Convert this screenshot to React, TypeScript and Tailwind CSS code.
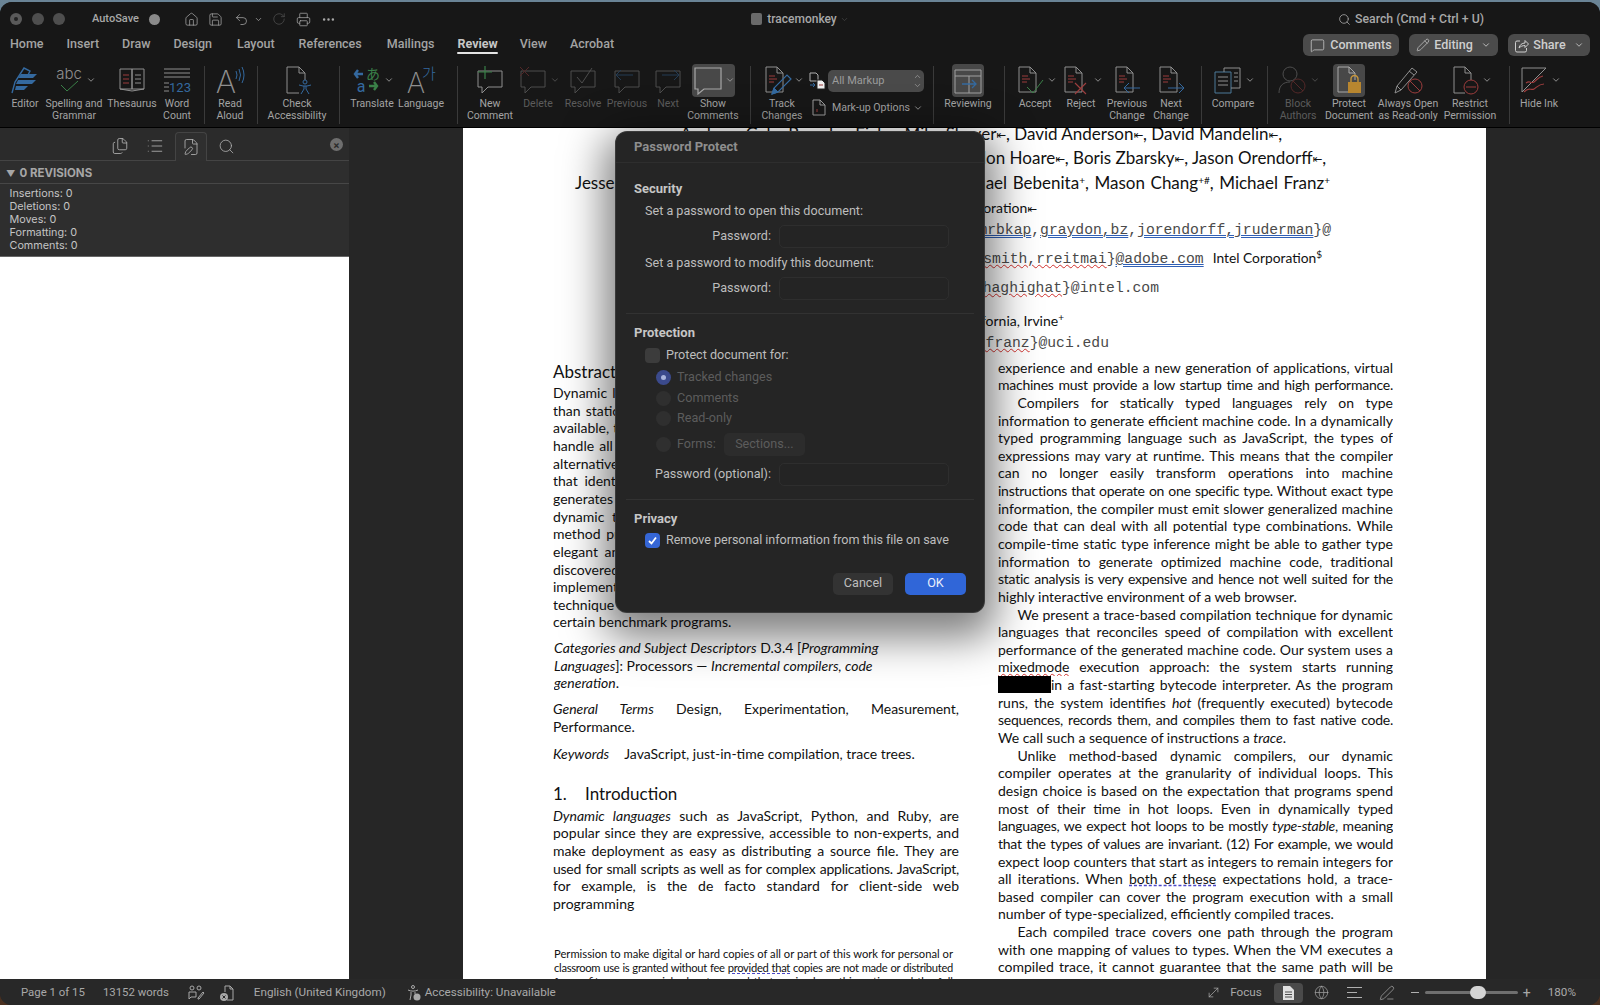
import type { ReactNode } from 'react';
import {
  ChevronDown,
  ChevronUp,
  Ellipsis,
  FilePen,
  Files,
  Globe,
  House,
  List,
  MessageSquare,
  MoveDiagonal,
  Pencil,
  PenLine,
  Printer,
  RotateCw,
  Save,
  Search,
  Undo2,
} from 'lucide-react';

const GRAY = '#8f8f8f';
const RED = '#9c3d3d';
const BLUE = '#34699f';
const GREEN = '#3a8048';

function Ico({ children, w = 32 }: { children: ReactNode; w?: number }) {
  return (
    <svg width={w} height="30" viewBox={`0 0 ${w} 30`} fill="none" stroke={GRAY} strokeWidth="1">
      {children}
    </svg>
  );
}

const docPath = <path d="M5 2h11l6 6v19H5zM16 2v6h6" />;
const redLines = <path d="M8 11h6M8 14h8M8 17h5" stroke={RED} />;
const bubble = <path d="M4 6h24v16H14l-6 6v-6H4z" />;

const EditorIcon = (
  <Ico>
    <path d="M3 28l3-11 9-14 6 3-2 4" stroke={BLUE} strokeWidth="1.4" />
    <path d="M12 9h16l-4 4H9zM9 15h18l-4 4H7zM7 21h12l-4 4H6z" fill={BLUE} stroke="none" />
  </Ico>
);
const SpellingIcon = (
  <Ico>
    <text x="16" y="14" textAnchor="middle" fontSize="15" fontFamily="Inter" fontWeight="300" fill={GRAY} stroke="none">abc</text>
    <path d="M8 20l6 6 11-10" stroke={GREEN} />
  </Ico>
);
const ThesaurusIcon = (
  <Ico>
    <path d="M4 4h12v20H4zM16 4h12v20H16zM4 24l12 2 12-2" />
    <path d="M7 10h6M7 14h6M7 18h6" stroke={RED} />
    <path d="M19 10h6M19 14h6M19 18h6" />
  </Ico>
);
const WordCountIcon = (
  <Ico>
    <path d="M3 4h26M3 8h26M3 12h26M3 18h5M3 22h5M3 26h5" />
    <text x="19" y="27" textAnchor="middle" fontSize="13" fontFamily="Roboto" fill={BLUE} stroke="none">123</text>
  </Ico>
);
const ReadAloudIcon = (
  <Ico>
    <text x="12" y="28" textAnchor="middle" fontSize="31" fontFamily="Inter" fontWeight="200" fill={GRAY} stroke="none">A</text>
    <path d="M22 6q2 4 0 8M25 4q3 6 0 12M28 2q4 8 0 16" stroke={BLUE} />
  </Ico>
);
const AccessibilityIcon = (
  <Ico>
    <path d="M6 28V2h12l6 6v7M18 2v6h6M6 28h12" />
    <circle cx="24" cy="17" r="2" stroke={BLUE} />
    <path d="M18 20l4 1h4l4-1M23 21v3l-3 5M25 21v3l3 5" stroke={BLUE} />
  </Ico>
);
const TranslateIcon = (
  <Ico>
    <text x="10" y="27" textAnchor="middle" fontSize="16" fontFamily="Roboto" fill={BLUE} stroke="none">a</text>
    <text x="22" y="14" textAnchor="middle" fontSize="14" fontFamily="Noto Sans CJK JP" fill={GREEN} stroke="none">あ</text>
    <path d="M4 9h8M7 5L4 9l3 4" stroke={BLUE} strokeWidth="2.4" />
    <path d="M18 21h8M23 17l3 4-3 4" stroke={GREEN} strokeWidth="2.4" />
  </Ico>
);
const LanguageIcon = (
  <Ico>
    <text x="11" y="28" textAnchor="middle" fontSize="28" fontFamily="Inter" fontWeight="200" fill={GRAY} stroke="none">A</text>
    <text x="24" y="14" textAnchor="middle" fontSize="15" fontFamily="Noto Sans CJK KR" fontWeight="300" fill={BLUE} stroke="none">가</text>
  </Ico>
);
const NewCommentIcon = (
  <Ico>
    {bubble}
    <path d="M11 1v13M4 7h14" stroke={GREEN} strokeWidth="1.2" />
  </Ico>
);
const DeleteIcon = (
  <Ico>
    {bubble}
    <path d="M3 2l9 9M12 2l-9 9" stroke={RED} />
  </Ico>
);
const ResolveIcon = (
  <Ico>
    {bubble}
    <path d="M10 12l5 6 10-15" />
  </Ico>
);
const PreviousIcon = (
  <Ico>
    {bubble}
    <path d="M22 10H5M10 5l-5 5 5 5" stroke={BLUE} />
  </Ico>
);
const NextIcon = (
  <Ico>
    {bubble}
    <path d="M10 10h17M22 5l5 5-5 5" stroke={BLUE} />
  </Ico>
);
const ShowIcon = (
  <Ico>
    <path d="M3 3h26v21H12l-6 5v-5H3z" strokeWidth="1.2" stroke="#a8a8a8" />
  </Ico>
);
const TrackIcon = (
  <Ico>
    {docPath}
    {redLines}
    <path d="M11 29l2-6 13-13 4 4-13 13z" stroke={BLUE} strokeWidth="1.2" />
    <path d="M11 29l2-6 4 4z" fill={BLUE} stroke={BLUE} />
  </Ico>
);
const AcceptIcon = (
  <Ico>
    {docPath}
    {redLines}
    <path d="M13 22l6 6 10-13" stroke={GREEN} />
  </Ico>
);
const RejectIcon = (
  <Ico>
    {docPath}
    {redLines}
    <path d="M15 18l11 11M26 18L15 29" stroke={RED} strokeWidth="1.2" />
  </Ico>
);
const PrevChangeIcon = (
  <Ico>
    {docPath}
    {redLines}
    <path d="M29 23H13M18 18l-5 5 5 5" stroke={BLUE} />
  </Ico>
);
const NextChangeIcon = (
  <Ico>
    {docPath}
    {redLines}
    <path d="M13 23h16M24 18l5 5-5 5" stroke={BLUE} />
  </Ico>
);
const CompareIcon = (
  <Ico>
    <path d="M3 7h16v21H3z" stroke="#4c7a9a" />
    <path d="M12 7V3h16v20h-9" />
    <path d="M6 12h10M6 16h10M6 20h10M22 8h4M22 12h4M22 16h4" />
  </Ico>
);
const BlockIcon = (
  <Ico>
    <circle cx="13" cy="9" r="7" />
    <path d="M2 28c0-8 5-11 11-11" />
    <circle cx="21" cy="21" r="7" stroke={RED} />
    <path d="M16 16l10 10" stroke={RED} />
  </Ico>
);
const ProtectIcon = (
  <Ico>
    <path d="M5 2h11l6 6v7M16 2v6h6M5 2v25h10" stroke="#a8a8a8" />
    <path d="M15 17h13v11H15z" fill="#b8862f" stroke="none" />
    <path d="M18 17v-3a3.500 3.500 0 017 0v3" stroke="#c6963d" strokeWidth="1.4" />
  </Ico>
);
const AlwaysOpenIcon = (
  <Ico>
    <path d="M3 28l2-7L20 3l5 4-16 18z" />
    <path d="M5 21l4 4M17 6l5 4" />
    <circle cx="23" cy="21" r="7" stroke={RED} />
    <path d="M18 16l10 10" stroke={RED} />
  </Ico>
);
const RestrictIcon = (
  <Ico>
    <path d="M5 28V2h11l6 6v7M16 2v6h6M5 28h11" />
    <circle cx="22" cy="22" r="7" stroke={RED} />
    <path d="M17 22h10" stroke={RED} />
  </Ico>
);
const HideInkIcon = (
  <Ico>
    <path d="M4 3h24L4 27z" />
    <path d="M8 18c4-3 5 1 8-1s4-5 9-6M6 27c5-6 7-1 10-3s5-5 10-5" stroke={RED} strokeWidth="1.2" />
  </Ico>
);
const ReviewingIcon = (
  <Ico>
    <path d="M3 5h26v23H3zM3 11h26M17 11v17" stroke="#a0a0a0" />
    <path d="M10 19h14M20 15l4 4-4 4" stroke={BLUE} strokeWidth="1.3" />
  </Ico>
);

type RibbonEntry =
  | { kind: 'div'; cls: string }
  | {
      kind: 'item';
      cls: string;
      icon: ReactNode;
      label: string[];
      chevron?: boolean;
      dim?: boolean;
      active?: boolean;
    }
  | { kind: 'markup'; cls: string };

const ribbon: RibbonEntry[] = [
  { kind: 'item', cls: 'ml-[5px] w-[40px]', icon: EditorIcon, label: ['Editor'] },
  { kind: 'item', cls: 'ml-0 w-[58px]', icon: SpellingIcon, label: ['Spelling and', 'Grammar'], chevron: true },
  { kind: 'item', cls: 'ml-[4px] w-[50px]', icon: ThesaurusIcon, label: ['Thesaurus'] },
  { kind: 'item', cls: 'ml-[5px] w-[30px]', icon: WordCountIcon, label: ['Word', 'Count'] },
  { kind: 'div', cls: 'ml-[12px]' },
  { kind: 'item', cls: 'ml-[10px] w-[30px]', icon: ReadAloudIcon, label: ['Read', 'Aloud'] },
  { kind: 'div', cls: 'ml-[12px]' },
  { kind: 'item', cls: 'ml-[9px] w-[60px]', icon: AccessibilityIcon, label: ['Check', 'Accessibility'] },
  { kind: 'div', cls: 'ml-[12px]' },
  { kind: 'item', cls: 'ml-[9px] w-[46px]', icon: TranslateIcon, label: ['Translate'], chevron: true },
  { kind: 'item', cls: 'ml-[3px] w-[46px]', icon: LanguageIcon, label: ['Language'] },
  { kind: 'div', cls: 'ml-[13px]' },
  { kind: 'item', cls: 'ml-[9px] w-[46px]', icon: NewCommentIcon, label: ['New', 'Comment'] },
  { kind: 'item', cls: 'ml-[7px] w-[36px]', icon: DeleteIcon, label: ['Delete'], chevron: true, dim: true },
  { kind: 'item', cls: 'ml-[8px] w-[38px]', icon: ResolveIcon, label: ['Resolve'], dim: true },
  { kind: 'item', cls: 'ml-[4px] w-[42px]', icon: PreviousIcon, label: ['Previous'], dim: true },
  { kind: 'item', cls: 'ml-[7px] w-[26px]', icon: NextIcon, label: ['Next'], dim: true },
  { kind: 'item', cls: 'ml-[6px] w-[52px]', icon: ShowIcon, label: ['Show', 'Comments'], chevron: true, active: true },
  { kind: 'div', cls: 'ml-[11px]' },
  { kind: 'item', cls: 'ml-[9px] w-[44px]', icon: TrackIcon, label: ['Track', 'Changes'], chevron: true },
  { kind: 'markup', cls: 'ml-[5px] w-[120px]' },
  { kind: 'div', cls: 'ml-[4px]' },
  { kind: 'item', cls: 'ml-[9px] w-[50px]', icon: ReviewingIcon, label: ['Reviewing'], active: true },
  { kind: 'div', cls: 'ml-[11px]' },
  { kind: 'item', cls: 'ml-[11px] w-[38px]', icon: AcceptIcon, label: ['Accept'], chevron: true },
  { kind: 'item', cls: 'ml-[8px] w-[38px]', icon: RejectIcon, label: ['Reject'], chevron: true },
  { kind: 'item', cls: 'ml-[6px] w-[42px]', icon: PrevChangeIcon, label: ['Previous', 'Change'] },
  { kind: 'item', cls: 'ml-[4px] w-[38px]', icon: NextChangeIcon, label: ['Next', 'Change'] },
  { kind: 'div', cls: 'ml-[11px]' },
  { kind: 'item', cls: 'ml-[8px] w-[46px]', icon: CompareIcon, label: ['Compare'], chevron: true },
  { kind: 'div', cls: 'ml-[11px]' },
  { kind: 'item', cls: 'ml-[12px] w-[36px]', icon: BlockIcon, label: ['Block', 'Authors'], chevron: true, dim: true },
  { kind: 'item', cls: 'ml-[7px] w-[52px]', icon: ProtectIcon, label: ['Protect', 'Document'], active: true },
  { kind: 'item', cls: 'ml-[1px] w-[64px]', icon: AlwaysOpenIcon, label: ['Always Open', 'as Read-only'] },
  { kind: 'item', cls: 'ml-[2px] w-[56px]', icon: RestrictIcon, label: ['Restrict', 'Permission'], chevron: true },
  { kind: 'div', cls: 'ml-[11px]' },
  { kind: 'item', cls: 'ml-[9px] w-[40px]', icon: HideInkIcon, label: ['Hide Ink'], chevron: true },
];

function MarkupBlock() {
  return (
    <div className="flex flex-col whitespace-nowrap pt-[8px] text-[11px] text-[#a3a3a3]">
      <div className="flex items-center gap-[2px]">
        <svg width="17" height="18" viewBox="0 0 17 18" fill="none" stroke="#b0b0b0" strokeWidth="1">
          <path d="M1 1h6l2 2v6H1z" />
          <path d="M8 8h5l3 3v6H8z" fill="#eee" stroke="#222" />
          <path d="M10 13h4" stroke={RED} />
          <path d="M1 13h5M4 11l2 2-2 2" stroke={BLUE} />
        </svg>
        <div className="flex h-[22px] w-[96px] items-center justify-between rounded-[5px] bg-[#4a4a4a] pl-[4px] pr-[2px] text-[#9b9b9b]">
          <span>All Markup</span>
          <span className="flex flex-col">
            <ChevronUp size={9} />
            <ChevronDown size={9} />
          </span>
        </div>
      </div>
      <div className="mt-[7px] flex items-center pl-[3px] text-[10.6px]">
        <svg width="14" height="17" viewBox="0 0 14 17" fill="none" stroke="#9c9c9c" strokeWidth="1">
          <path d="M1 1h7l5 5v10H1zM8 1v5h5" />
          <path d="M5 10v3" stroke={RED} />
        </svg>
        <span className="ml-[6px]">Mark-up Options</span>
        <ChevronDown size={10} className="ml-[3px]" />
      </div>
    </div>
  );
}

function Ribbon() {
  return (
    <div className="flex h-[71px] items-start pt-[6px] text-[#a3a3a3]">
      {ribbon.map((r, i) => {
        if (r.kind === 'div') {
          return <div key={i} className={`${r.cls} mt-[4px] h-[58px] w-px bg-[#3a3a3a]`} />;
        }
        if (r.kind === 'markup') {
          return (
            <div key={i} className={r.cls}>
              <MarkupBlock />
            </div>
          );
        }
        return (
          <div key={i} className={`${r.cls} flex shrink-0 flex-col items-center`}>
            <div className="flex h-[36px] items-center justify-center">
              <div className={`flex h-[33px] items-center rounded-[4px] ${r.active ? 'bg-[#484848]' : ''} ${r.dim ? 'opacity-45' : ''}`}>
                {r.icon}
                {r.chevron && <ChevronDown size={10} className="ml-[1px] shrink-0" strokeWidth={2} />}
              </div>
            </div>
            <div className={`whitespace-nowrap text-center text-[10.5px] leading-[11.5px] ${r.dim ? 'text-[#5c5c5c]' : ''}`}>
              {r.label.map((l) => (
                <div key={l}>{l}</div>
              ))}
            </div>
          </div>
        );
      })}
    </div>
  );
}

const tabs = [
  ['Home', 'ml-[10px]'],
  ['Insert', 'ml-[23px]'],
  ['Draw', 'ml-[23px]'],
  ['Design', 'ml-[23px]'],
  ['Layout', 'ml-[25px]'],
  ['References', 'ml-[24px]'],
  ['Mailings', 'ml-[25px]'],
  ['Review', 'ml-[23px]'],
  ['View', 'ml-[22px]'],
  ['Acrobat', 'ml-[23px]'],
];

function TitleBar() {
  return (
    <div className="grid h-[30px] grid-cols-[1fr_auto_1fr] items-center pt-[4px] text-[#a8a8a8]">
      <div className="flex items-center">
        <span className="ml-[10px] flex h-[12px] w-[12px] items-center justify-center rounded-full bg-[#5a5a5a]">
          <span className="h-[4px] w-[4px] rounded-full bg-[#222]" />
        </span>
        <span className="ml-[10px] h-[12px] w-[12px] rounded-full bg-[#4e4e4e]" />
        <span className="ml-[9px] h-[12px] w-[12px] rounded-full bg-[#4e4e4e]" />
        <span className="ml-[27px] text-[11px] font-medium">AutoSave</span>
        <span className="ml-[10px] h-[11px] w-[11px] rounded-full bg-[#8a8a8a]" />
        <House size={15} strokeWidth={1.2} className="ml-[24px]" />
        <Save size={15} strokeWidth={1.2} className="ml-[9px]" />
        <Undo2 size={15} strokeWidth={1.2} className="ml-[11px]" />
        <ChevronDown size={9} className="ml-[5px]" />
        <RotateCw size={14} strokeWidth={1.2} className="ml-[9px] text-[#555]" />
        <Printer size={15} strokeWidth={1.2} className="ml-[10px]" />
        <Ellipsis size={15} className="ml-[10px]" />
      </div>
      <div className="flex items-center text-[12px] font-medium">
        <span className="mr-[5px] h-[12px] w-[11px] rounded-[2px] bg-[#6a6a6a]" />
        <span>tracemonkey</span>
        <ChevronDown size={9} className="ml-[3px] text-[#444]" />
      </div>
      <div className="flex items-center justify-end pr-[116px] text-[12.3px] font-medium">
        <Search size={13} strokeWidth={1.5} className="mr-[4px]" />
        <span>Search (Cmd + Ctrl + U)</span>
      </div>
    </div>
  );
}

function TabsRow() {
  return (
    <div className="flex h-[24px] items-center justify-between text-[12.5px] font-medium text-[#a3a3a3]">
      <div className="flex h-full items-center">
        {tabs.map(([t, cls]) => (
          <div key={t} className={`${cls} relative`}>
            <span className={t === 'Review' ? 'font-bold text-[#c6c6c6]' : ''}>{t}</span>
            {t === 'Review' && <span className="absolute inset-x-0 top-[17px] h-[2px] rounded-full bg-[#e4e4e4]" />}
          </div>
        ))}
      </div>
      <div className="mt-[2px] flex items-center pr-[10px] text-[#cfcfcf]">
        <button className="flex h-[22px] w-[96px] items-center justify-center gap-[5px] rounded-[6px] bg-[#4b4b4b]">
          <MessageSquare size={15} strokeWidth={1.2} />
          <span>Comments</span>
        </button>
        <button className="ml-[10px] flex h-[22px] w-[89px] items-center justify-center gap-[4px] rounded-[6px] bg-[#4b4b4b]">
          <Pencil size={14} strokeWidth={1.2} />
          <span>Editing</span>
          <ChevronDown size={10} className="ml-[4px]" />
        </button>
        <button className="ml-[10px] flex h-[22px] w-[82px] items-center justify-center gap-[4px] rounded-[6px] bg-[#4b4b4b]">
          <svg width="15" height="15" viewBox="0 0 15 15" fill="none" stroke="currentColor" strokeWidth="1">
            <path d="M6 3H3a1.500 1.500 0 00-1.500 1.500v8A1.500 1.500 0 003 14h8a1.500 1.500 0 001.500-1.500V10" />
            <path d="M5 10c.500-3 3-5 6-5V2.500L14.500 6 11 9.500V7.500C8.500 7.500 6.500 8.500 5 10z" />
          </svg>
          <span>Share</span>
          <ChevronDown size={10} className="ml-[4px]" />
        </button>
      </div>
    </div>
  );
}

function Sidebar() {
  const stats = ['Insertions: 0', 'Deletions: 0', 'Moves: 0', 'Formatting: 0', 'Comments: 0'];
  return (
    <div className="flex w-[349px] shrink-0 flex-col bg-white">
      <div className="flex h-[33px] items-end border-b border-[#444] bg-[#2b2b2b] text-[#b5b5b5]">
        <div className="mb-[5px] ml-[111px]">
          <Files size={18} strokeWidth={1.1} />
        </div>
        <div className="mb-[5px] ml-[17px]">
          <List size={18} strokeWidth={1.1} />
        </div>
        <div className="ml-[11px] -mb-px flex h-[29px] w-[32px] items-center justify-center rounded-t-[4px] border border-b-0 border-[#444] bg-[#2f2f2f]">
          <FilePen size={18} strokeWidth={1.1} />
        </div>
        <div className="mb-[5px] ml-[11px]">
          <Search size={17} strokeWidth={1.1} />
        </div>
        <div className="mb-[9px] ml-[95px] flex h-[13px] w-[13px] items-center justify-center rounded-full bg-[#6e6e6e] text-[10px] font-bold leading-none text-[#2b2b2b]">
          ×
        </div>
      </div>
      <div className="flex h-[23px] items-center border-b border-[#474747] bg-[#2e2e2e] pl-[6px] pt-[3px] text-[11.5px] font-bold text-[#a6a6a6]">
        <span className="mr-[4px] text-[9px]">▼</span>
        <span>0 REVISIONS</span>
      </div>
      <div className="border-b border-[#666] bg-[#2e2e2e] pb-[4px] pl-[9.5px] pt-[3px] text-[10.8px] leading-[13px] text-[#c4c4c4]">
        {stats.map((s) => (
          <div key={s}>{s}</div>
        ))}
      </div>
    </div>
  );
}

function Ln({ children, last, indent, tight }: { children: ReactNode; last?: boolean; indent?: boolean; tight?: boolean }) {
  return (
    <div
      className={`h-[17.65px] overflow-hidden leading-[17.65px] ${last ? '' : 'text-justify [text-align-last:justify]'} ${indent ? 'pl-[19.5px]' : ''} ${tight ? 'tracking-[-0.25px]' : ''}`}
    >
      {children}
    </div>
  );
}

function Mk() {
  return <span className="align-middle font-['DejaVu_Sans'] text-[11.5px] leading-none">⇤</span>;
}

function Sp({ children }: { children: ReactNode }) {
  return <sup className="text-[10px] leading-none">{children}</sup>;
}

function Spell({ children }: { children: ReactNode }) {
  return <span className="underline decoration-[#d0312d] decoration-wavy decoration-1">{children}</span>;
}

function Grammar({ children }: { children: ReactNode }) {
  return <span className="underline decoration-[#2f5fb5] decoration-double decoration-1">{children}</span>;
}

const abstractLines = [
  'Dynamic languages such as JavaScript are more difficult to com-',
  'than statically typed ones. Since no concrete type information is',
  'available, traditional compilers need to emit generic code that can',
  'handle all possible type combinations at runtime. We present an',
  'alternative compilation technique for dynamically typed languages',
  'that identifies frequently executed loop traces at run-time and',
  'generates machine code on the fly that is specialized for the actual',
  'dynamic types occurring on each path through the loop. Our',
  'method provides cheap inter-procedural type specialization, and an',
  'elegant and natural way of incorporating nested loops that are',
  'discovered at runtime. We have implemented these ideas in an',
  'implementation for the Firefox web browser and show that our',
  'technique achieves speedups of up to a factor of 10 on',
];

function LeftColumn() {
  return (
    <div className="w-[406px] shrink-0">
      <div className="h-[24.5px] text-[17px] leading-[24.5px]">Abstract</div>
      {abstractLines.map((l) => (
        <Ln key={l}>{l}</Ln>
      ))}
      <Ln last>certain benchmark programs.</Ln>
      <div className="mt-[8px] pl-[1px]">
        <Ln last>
          <i>Categories and Subject Descriptors</i> D.3.4 [<i>Programming</i>
        </Ln>
        <Ln last>
          <i>Languages</i>]: Processors — <i>Incremental compilers, code</i>
        </Ln>
        <Ln last>
          <i>generation</i>.
        </Ln>
      </div>
      <div className="mt-[8px]">
        <Ln>
          <i>General Terms</i> Design, Experimentation, Measurement,
        </Ln>
        <Ln last>Performance.</Ln>
      </div>
      <div className="mt-[9.7px]">
        <Ln last>
          <i>Keywords</i>
          <span className="ml-[15px]">JavaScript, just-in-time compilation, trace trees.</span>
        </Ln>
      </div>
      <div className="mt-[19px] flex h-[24px] text-[17px] leading-[24px]">
        <span className="w-[32px]">1.</span>
        <span>Introduction</span>
      </div>
      <div className="mt-[1px]">
        <Ln>
          <i>Dynamic languages</i> such as JavaScript, Python, and Ruby, are
        </Ln>
        <Ln>popular since they are expressive, accessible to non-experts, and</Ln>
        <Ln>make deployment as easy as distributing a source file. They are</Ln>
        <Ln tight>used for small scripts as well as for complex applications. JavaScript,</Ln>
        <Ln>for example, is the de facto standard for client-side web</Ln>
        <Ln last>programming</Ln>
      </div>
      <div className="mt-[34.4px] w-[400px] pl-[1px] text-[11.2px] leading-[14.3px]">
        <div className="text-justify [text-align-last:justify]">
          Permission to make digital or hard copies of all or part of this work for personal or
        </div>
        <div className="text-justify tracking-[-0.3px] [text-align-last:justify]">
          classroom use is granted without fee{' '}
          <span className="underline decoration-[#4a48c8] decoration-dashed">provided that</span> copies are not made or distributed
        </div>
        <div className="text-justify [text-align-last:justify]">
          for profit or commercial advantage and that copies bear this notice and the full
        </div>
      </div>
    </div>
  );
}

function RightColumn() {
  return (
    <div className="-mt-[1px] ml-[39px] w-[395px] shrink-0">
      <Ln>experience and enable a new generation of applications, virtual</Ln>
      <Ln tight>machines must provide a low startup time and high performance.</Ln>
      <Ln indent>Compilers for statically typed languages rely on type</Ln>
      <Ln>information to generate efficient machine code. In a dynamically</Ln>
      <Ln>typed programming language such as JavaScript, the types of</Ln>
      <Ln>expressions may vary at runtime. This means that the compiler</Ln>
      <Ln>can no longer easily transform operations into machine</Ln>
      <Ln tight>instructions that operate on one specific type. Without exact type</Ln>
      <Ln>information, the compiler must emit slower generalized machine</Ln>
      <Ln>code that can deal with all potential type combinations. While</Ln>
      <Ln>compile-time static type inference might be able to gather type</Ln>
      <Ln>information to generate optimized machine code, traditional</Ln>
      <Ln tight>static analysis is very expensive and hence not well suited for the</Ln>
      <Ln last>highly interactive environment of a web browser.</Ln>
      <Ln indent>We present a trace-based compilation technique for dynamic</Ln>
      <Ln>languages that reconciles speed of compilation with excellent</Ln>
      <Ln>performance of the generated machine code. Our system uses a</Ln>
      <Ln>
        <Spell>mixedmode</Spell> execution approach: the system starts running
      </Ln>
      <Ln>
        <span className="inline-block h-[17px] w-[53px] bg-black align-top" />
        in a fast-starting bytecode interpreter. As the program
      </Ln>
      <Ln>
        runs, the system identifies <i>hot</i> (frequently executed) bytecode
      </Ln>
      <Ln tight>sequences, records them, and compiles them to fast native code.</Ln>
      <Ln last>
        We call such a sequence of instructions a <i>trace</i>.
      </Ln>
      <Ln indent>Unlike method-based dynamic compilers, our dynamic</Ln>
      <Ln>compiler operates at the granularity of individual loops. This</Ln>
      <Ln>design choice is based on the expectation that programs spend</Ln>
      <Ln>most of their time in hot loops. Even in dynamically typed</Ln>
      <Ln tight>
        languages, we expect hot loops to be mostly <i>type-stable</i>, meaning
      </Ln>
      <Ln tight>that the types of values are invariant. (12) For example, we would</Ln>
      <Ln>expect loop counters that start as integers to remain integers for</Ln>
      <Ln>
        all iterations. When <span className="underline decoration-[#4a48c8] decoration-dashed">both of these</span> expectations hold, a trace-
      </Ln>
      <Ln>based compiler can cover the program execution with a small</Ln>
      <Ln last>number of type-specialized, efficiently compiled traces.</Ln>
      <Ln indent>Each compiled trace covers one path through the program</Ln>
      <Ln>with one mapping of values to types. When the VM executes a</Ln>
      <Ln>compiled trace, it cannot guarantee that the same path will be</Ln>
    </div>
  );
}

function Page() {
  const mono = "font-['Liberation_Mono'] text-[14.7px] text-[#4a4a4a]";
  return (
    <div className="w-[1023px] shrink-0 overflow-hidden bg-white font-['Lato'] text-[14px] text-[#111]">
      <div className="-mt-[6.25px] whitespace-nowrap">
        <div className="h-[24.500px] pr-[204px] text-right text-[17px] leading-[24.500px]">
          Andreas Gal<Mk />, Brendan Eich<Mk />, Mike Shaver<Mk />, David Anderson<Mk />, David Mandelin<Mk />,
        </div>
        <div className="h-[24.500px] pr-[160px] text-right text-[17px] leading-[24.500px]">
          Mohammad R. Haghighat<Sp>$</Sp>, Blake Kaplan<Mk />, Graydon Hoare<Mk />, Boris Zbarsky<Mk />, Jason Orendorff<Mk />,
        </div>
        <div className="h-[24.500px] pl-[112px] pr-[156px] text-justify text-[17px] leading-[24.500px] [text-align-last:justify] whitespace-normal">
          Jesse Ruderman<Mk />, Edwin Smith<Sp>#</Sp>, Rick Reitmaier<Sp>#</Sp>, Michael Bebenita<Sp>+</Sp>, Mason Chang<Sp>+#</Sp>, Michael Franz<Sp>+</Sp>
        </div>
        <div className="mt-[2.750px] h-[20px] pr-[449px] text-right text-[14px] leading-[20px]">
          Mozilla Corporation<Mk />
        </div>
        <div className={`mt-[2px] h-[20px] pr-[155px] text-right leading-[20px] ${mono}`}>
          {'{gal,brendan,shaver,danderson,dmandelin,'}
          <Grammar>mrbkap</Grammar>,<Grammar>graydon,bz</Grammar>,<Grammar>jorendorff,jruderman</Grammar>
          {'}@'}
        </div>
        <div className="mt-[8px] h-[20px] pr-[164px] text-right leading-[20px]">
          <span className={mono}>
            {'{'}
            <Spell>edwsmith,rreitmai</Spell>
            {'}'}
            <Grammar>@adobe.com</Grammar>
          </span>
          <span className="ml-[9px] text-[13.8px]">
            Intel Corporation<Sp>$</Sp>
          </span>
        </div>
        <div className={`mt-[10px] h-[20px] pr-[327px] text-right leading-[20px] ${mono}`}>
          {'{'}
          <Spell>mohammad.r.haghighat</Spell>
          {'}@intel.com'}
        </div>
        <div className="mt-[13px] h-[20px] pr-[422px] text-right text-[14px] leading-[20px]">
          University of California, Irvine<Sp>+</Sp>
        </div>
        <div className={`mt-[2px] h-[20px] pr-[377px] text-right leading-[20px] ${mono}`}>
          {'{'}
          <Spell>mbebenit,changm,franz</Spell>
          {'}@uci.edu'}
        </div>
      </div>
      <div className="mt-[6.600px] flex pl-[90px]">
        <LeftColumn />
        <RightColumn />
      </div>
    </div>
  );
}

function PwField({ label, labelCls }: { label: string; labelCls?: string }) {
  return (
    <div className={`flex items-center ${labelCls ?? ''}`}>
      <span className="w-[155px] text-right">{label}</span>
      <span className="ml-[8px] h-[23px] w-[170px] rounded-[5px] border border-[#2e2e2e] bg-[#242424]" />
    </div>
  );
}

function Radio({ label, on }: { label: string; on?: boolean }) {
  return (
    <div className="flex h-[18px] items-center pl-[40px] text-[#5c5c5c]">
      <span className={`flex h-[15px] w-[15px] items-center justify-center rounded-full ${on ? 'bg-[#3b4a8c]' : 'bg-[#2f2f2f]'}`}>
        {on && <span className="h-[5px] w-[5px] rounded-full bg-[#a9b4dc]" />}
      </span>
      <span className="ml-[6px]">{label}</span>
    </div>
  );
}

function Dialog() {
  return (
    <div className="absolute left-[616px] top-[132px] z-10 h-[480px] w-[368px] rounded-[11px] bg-[#252525] font-['Roboto'] text-[12.6px] text-[#bdbdbd] shadow-[0_14px_42px_12px_rgba(0,0,0,0.5)] ring-1 ring-[#3a3a3a]">
      <div className="h-[30.5px] border-b border-[#2e2e2e] pl-[18px] text-[13px] font-bold leading-[30.5px] text-[#8e8e8e]">Password Protect</div>
      <div className="ml-[18px] mt-[17px] h-[18px] text-[13px] font-bold leading-[18px] text-[#c6c6c6]">Security</div>
      <div className="ml-[29px] mt-[4px] h-[18px] leading-[18px]">Set a password to open this document:</div>
      <div className="mt-[5px]">
        <PwField label="Password:" />
      </div>
      <div className="ml-[29px] mt-[6px] h-[18px] leading-[18px]">Set a password to modify this document:</div>
      <div className="mt-[5px]">
        <PwField label="Password:" />
      </div>
      <div className="mx-[10px] mt-[13px] h-px bg-[#323232]" />
      <div className="ml-[18px] mt-[10px] h-[18px] text-[13px] font-bold leading-[18px] text-[#c6c6c6]">Protection</div>
      <div className="ml-[29px] mt-[5px] flex h-[18px] items-center">
        <span className="h-[15px] w-[15px] rounded-[4px] bg-[#3c3c3c]" />
        <span className="ml-[6px]">Protect document for:</span>
      </div>
      <div className="mt-[4px]">
        <Radio label="Tracked changes" on />
      </div>
      <div className="mt-[3px]">
        <Radio label="Comments" />
      </div>
      <div className="mt-[2px]">
        <Radio label="Read-only" />
      </div>
      <div className="mt-[5px] flex h-[23px] items-center pl-[40px] text-[#5c5c5c]">
        <span className="h-[15px] w-[15px] rounded-full bg-[#2f2f2f]" />
        <span className="ml-[6px]">Forms:</span>
        <span className="ml-[8px] flex h-[23px] w-[81px] items-center justify-center rounded-[5px] bg-[#2c2c2c]">Sections...</span>
      </div>
      <div className="mt-[7px]">
        <PwField label="Password (optional):" />
      </div>
      <div className="mx-[10px] mt-[13px] h-px bg-[#323232]" />
      <div className="ml-[18px] mt-[10px] h-[18px] text-[13px] font-bold leading-[18px] text-[#c6c6c6]">Privacy</div>
      <div className="ml-[29px] mt-[4px] flex h-[18px] items-center">
        <span className="flex h-[15px] w-[15px] items-center justify-center rounded-[4px] bg-[#3566d6]">
          <svg width="11" height="11" viewBox="0 0 11 11" fill="none" stroke="#fff" strokeWidth="1.8">
            <path d="M2 6l2.500 2.500L9 2.500" />
          </svg>
        </span>
        <span className="ml-[6px] whitespace-nowrap tracking-[-0.05px]">Remove personal information from this file on save</span>
      </div>
      <div className="mt-[23px] flex justify-end gap-[12px] pr-[18px]">
        <button className="h-[22px] w-[60px] rounded-[5px] bg-[#333]">Cancel</button>
        <button className="h-[22px] w-[61px] rounded-[5px] bg-[#3066d8] text-[#e8eefc]">OK</button>
      </div>
    </div>
  );
}

function StatusBar() {
  return (
    <div className="flex h-[26px] shrink-0 items-center bg-[#282828] pt-[1px] font-['Roboto'] text-[11.7px] text-[#a8a8a8]">
      <span className="ml-[21px] text-[11.4px]">Page 1 of 15</span>
      <span className="ml-[18px] text-[11.4px]">13152 words</span>
      <svg className="ml-[18px]" width="18" height="18" viewBox="0 0 18 18" fill="none" stroke="currentColor" strokeWidth="1">
        <circle cx="5" cy="4" r="2" />
        <circle cx="12" cy="4" r="2" />
        <path d="M2 8h7v5H4l-2 2zM11 14l5-6 1 1-5 6h-1z" />
      </svg>
      <svg className="ml-[14px]" width="16" height="18" viewBox="0 0 16 18" fill="none" stroke="currentColor" strokeWidth="1">
        <path d="M6 2h5l3 3v11H8M11 2v3h3M6 2v6" />
        <circle cx="5" cy="13" r="4" fill="currentColor" stroke="none" />
        <path d="M3.500 11.500l3 3M6.500 11.500l-3 3" stroke="#282828" />
      </svg>
      <span className="ml-[19px]">English (United Kingdom)</span>
      <svg className="ml-[20px]" width="16" height="18" viewBox="0 0 16 18" fill="none" stroke="currentColor" strokeWidth="1">
        <circle cx="7" cy="3" r="1.500" />
        <path d="M2 6c3 1.500 7 1.500 10 0M5 8v3l-1 5M9 8v2" />
        <circle cx="11" cy="13" r="3.500" fill="currentColor" stroke="none" />
      </svg>
      <span className="ml-[3px]">Accessibility: Unavailable</span>
      <div className="ml-auto flex items-center pr-[24px]">
        <MoveDiagonal size={15} strokeWidth={1.2} />
        <span className="ml-[9px]">Focus</span>
        <span className="ml-[12px] flex h-[20px] w-[29px] items-center justify-center rounded-[4px] bg-[#4a4a4a] text-[#e0e0e0]">
          <svg width="11" height="14" viewBox="0 0 11 14">
            <path d="M0 0h7l4 4v10H0z" fill="currentColor" />
            <path d="M2 6h7M2 8.500h7M2 11h7" stroke="#4a4a4a" />
          </svg>
        </span>
        <Globe size={15} strokeWidth={1.1} className="ml-[11px]" />
        <span className="ml-[18px] flex w-[15px] flex-col gap-[4px]">
          <span className="h-px w-[15px] bg-[#b0b0b0]" />
          <span className="h-px w-[10px] bg-[#b0b0b0]" />
          <span className="h-px w-[15px] bg-[#b0b0b0]" />
        </span>
        <PenLine size={16} strokeWidth={1.1} className="ml-[17px]" />
        <span className="ml-[16px] h-px w-[8px] bg-[#b0b0b0]" />
        <span className="relative ml-[6px] h-[3px] w-[93px] rounded-full bg-[#6f6f6f]">
          <span className="absolute left-[45px] top-[-5px] h-[13px] w-[16px] rounded-full bg-[#d4d4d4]" />
        </span>
        <span className="ml-[5px] text-[14px] leading-none">+</span>
        <span className="ml-[17px]">180%</span>
      </div>
    </div>
  );
}

export default function App() {
  return (
    <div className="relative h-[1005px] w-[1600px] overflow-hidden bg-gradient-to-b from-[#6a8496] from-0% via-[#3c3c3c] via-50% to-[#4a3020] font-['Inter'] ">
      <div className="mt-[2px] flex h-[1003px] flex-col overflow-hidden rounded-[12px] bg-[#262626]">
        <div className="shrink-0 border-b border-black bg-[#171717] font-['Roboto']">
          <TitleBar />
          <TabsRow />
          <Ribbon />
        </div>
        <div className="flex min-h-0 flex-1">
          <Sidebar />
          <div className="w-[114px] shrink-0" />
          <Page />
        </div>
        <StatusBar />
      </div>
      <Dialog />
    </div>
  );
}
